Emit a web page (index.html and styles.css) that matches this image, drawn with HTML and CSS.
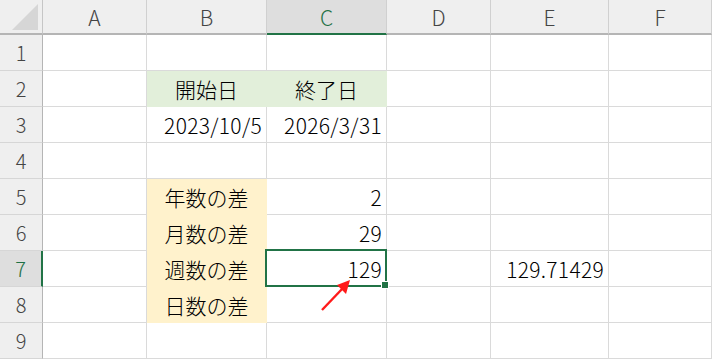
FILE: index.html
```html
<!DOCTYPE html>
<html lang="ja">
<head>
    <meta charset="UTF-8">
    <title>日付の差</title>
    <link rel="stylesheet" href="styles.css">
</head>
<body>
    <div class="sheet">
        <div class="grid">
            <!-- column headers -->
            <div class="corner">
                <svg width="28" height="28" viewBox="0 0 28 28"><polygon points="27,1 27,27 1,27" fill="#d6d6d6"/></svg>
            </div>
            <div class="colhead">A</div>
            <div class="colhead">B</div>
            <div class="colhead active">C</div>
            <div class="colhead">D</div>
            <div class="colhead">E</div>
            <div class="colhead">F</div>

            <!-- row 1 -->
            <div class="rowhead">1</div>
            <div class="cell"></div><div class="cell"></div><div class="cell"></div><div class="cell"></div><div class="cell"></div><div class="cell"></div>

            <!-- row 2 -->
            <div class="rowhead">2</div>
            <div class="cell"></div>
            <div class="cell green center">開始日</div>
            <div class="cell green center">終了日</div>
            <div class="cell"></div><div class="cell"></div><div class="cell"></div>

            <!-- row 3 -->
            <div class="rowhead">3</div>
            <div class="cell"></div>
            <div class="cell num">2023/10/5</div>
            <div class="cell num">2026/3/31</div>
            <div class="cell"></div><div class="cell"></div><div class="cell"></div>

            <!-- row 4 -->
            <div class="rowhead">4</div>
            <div class="cell"></div><div class="cell"></div><div class="cell"></div><div class="cell"></div><div class="cell"></div><div class="cell"></div>

            <!-- row 5 -->
            <div class="rowhead">5</div>
            <div class="cell"></div>
            <div class="cell yellow center">年数の差</div>
            <div class="cell num">2</div>
            <div class="cell"></div><div class="cell"></div><div class="cell"></div>

            <!-- row 6 -->
            <div class="rowhead">6</div>
            <div class="cell"></div>
            <div class="cell yellow center">月数の差</div>
            <div class="cell num">29</div>
            <div class="cell"></div><div class="cell"></div><div class="cell"></div>

            <!-- row 7 -->
            <div class="rowhead active">7</div>
            <div class="cell"></div>
            <div class="cell yellow center">週数の差</div>
            <div class="cell num selected">129<span class="handle"></span></div>
            <div class="cell"></div>
            <div class="cell num">129.71429</div>
            <div class="cell"></div>

            <!-- row 8 -->
            <div class="rowhead">8</div>
            <div class="cell"></div>
            <div class="cell yellow center">日数の差</div>
            <div class="cell"></div><div class="cell"></div><div class="cell"></div><div class="cell"></div>

            <!-- row 9 -->
            <div class="rowhead">9</div>
            <div class="cell"></div><div class="cell"></div><div class="cell"></div><div class="cell"></div><div class="cell"></div><div class="cell"></div>
        </div>

        <!-- pointer arrow -->
        <svg class="arrow" width="712" height="359" viewBox="0 0 712 359">
            <line x1="322" y1="310" x2="343" y2="288" stroke="#ff1a1a" stroke-width="2.4"/>
            <polygon points="350,280 346,294 337,285" fill="#ff1a1a"/>
        </svg>
    </div>
</body>
</html>
```

FILE: styles.css
```css
body {
    margin: 0;
    background: white;
    font-family: "Noto Sans CJK JP", sans-serif;
    overflow: hidden;
}
.sheet {
    position: relative;
    width: 712px;
    height: 359px;
}
.grid {
    display: grid;
    grid-template-columns: 43px 104px 120px 120px 104px 118px 1fr;
    grid-template-rows: 35px repeat(9, 36px);
}
.corner, .colhead, .rowhead, .cell {
    box-sizing: border-box;
    display: flex;
    align-items: center;
}
.corner {
    background: #efefef;
    border-right: 1px solid #c6c6c6;
    border-bottom: 2px solid #b5b5b5;
    justify-content: flex-end;
    align-items: flex-end;
    padding: 0 3px 2px 0;
}
.colhead {
    background: #efefef;
    color: #444;
    font-size: 21px;
    font-weight: 300;
    justify-content: center;
    border-right: 1px solid #d0d0d0;
    border-bottom: 2px solid #b5b5b5;
    padding-top: 1px;
}
.colhead.active {
    background: #dedede;
    color: #1e7145;
    border-bottom-color: #217346;
}
.rowhead {
    background: #efefef;
    color: #444;
    font-size: 20px;
    font-weight: 300;
    justify-content: center;
    border-right: 1px solid #b5b5b5;
    border-bottom: 1px solid #d6d6d6;
}
.rowhead.active {
    background: #dedede;
    color: #1e7145;
    border-right: 2px solid #217346;
}
.cell {
    position: relative;
    font-size: 21px;
    font-weight: 300;
    color: #000;
    border-right: 1px solid #dadada;
    border-bottom: 1px solid #dadada;
    padding: 0 4px;
}
.center {
    justify-content: center;
}
.num {
    justify-content: flex-end;
    letter-spacing: 0.3px;
}
.green {
    background: #e2efda;
    border-color: #e2efda;
}
.yellow {
    background: #fff2cc;
    border-color: #fff2cc;
}
.selected::after {
    content: "";
    position: absolute;
    top: -2px;
    left: -2px;
    right: -1px;
    bottom: -1px;
    border: 2px solid #217346;
}
.handle {
    position: absolute;
    right: -3px;
    bottom: -3px;
    width: 6px;
    height: 6px;
    background: #217346;
    border: 1px solid white;
    z-index: 2;
}
.arrow {
    position: absolute;
    left: 0;
    top: 0;
    pointer-events: none;
}
```
